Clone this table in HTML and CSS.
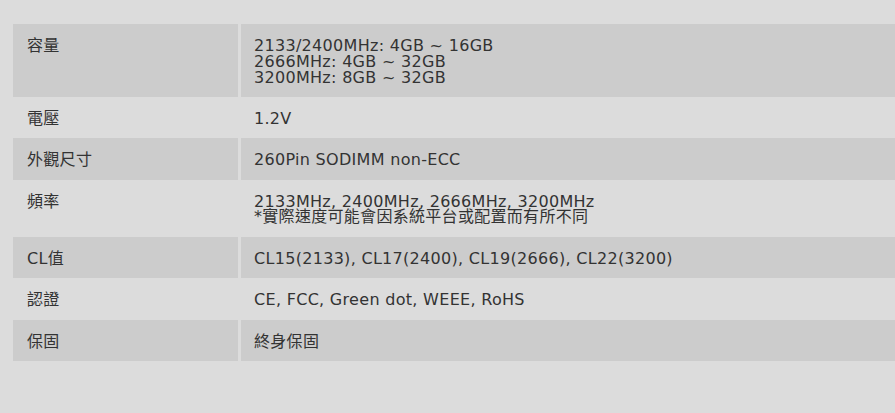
FILE: index.html
```html
<!DOCTYPE html>
<html lang="zh-Hant">
<head>
<meta charset="utf-8">
<link rel="stylesheet" href="styles.css">
</head>
<body>
<div class="spec">
  <div class="row alt"><div class="k">容量</div><div class="v">2133/2400MHz: 4GB ~ 16GB<br>2666MHz: 4GB ~ 32GB<br>3200MHz: 8GB ~ 32GB</div></div>
  <div class="row"><div class="k">電壓</div><div class="v">1.2V</div></div>
  <div class="row alt"><div class="k">外觀尺寸</div><div class="v">260Pin SODIMM non-ECC</div></div>
  <div class="row"><div class="k">頻率</div><div class="v">2133MHz, 2400MHz, 2666MHz, 3200MHz<br>*實際速度可能會因系統平台或配置而有所不同</div></div>
  <div class="row alt"><div class="k">CL值</div><div class="v">CL15(2133), CL17(2400), CL19(2666), CL22(3200)</div></div>
  <div class="row"><div class="k">認證</div><div class="v">CE, FCC, Green dot, WEEE, RoHS</div></div>
  <div class="row alt"><div class="k">保固</div><div class="v">終身保固</div></div>
</div>
</body>
</html>
```

FILE: styles.css
```css
html, body {
  margin: 0;
  padding: 0;
  overflow: hidden;
  background: #dcdcdc;
}
body {
  font-family: "DejaVu Sans", "Noto Sans CJK TC", sans-serif;
  font-size: 16px;
  line-height: 15.75px;
  letter-spacing: 0.3px;
  color: #333333;
  padding: 24px 0 0 13px;
  height: 413px;
  box-sizing: border-box;
}
.spec {
  width: 920px;
  display: flex;
  flex-direction: column;
}
.row {
  display: grid;
  grid-template-columns: 225px 1fr;
  column-gap: 3px;
}
.k, .v {
  padding: 14px 13px 11.65px 14px;
}
.v {
  padding-left: 13px;
}
.alt .k, .alt .v {
  background: #cccccc;
}
```
